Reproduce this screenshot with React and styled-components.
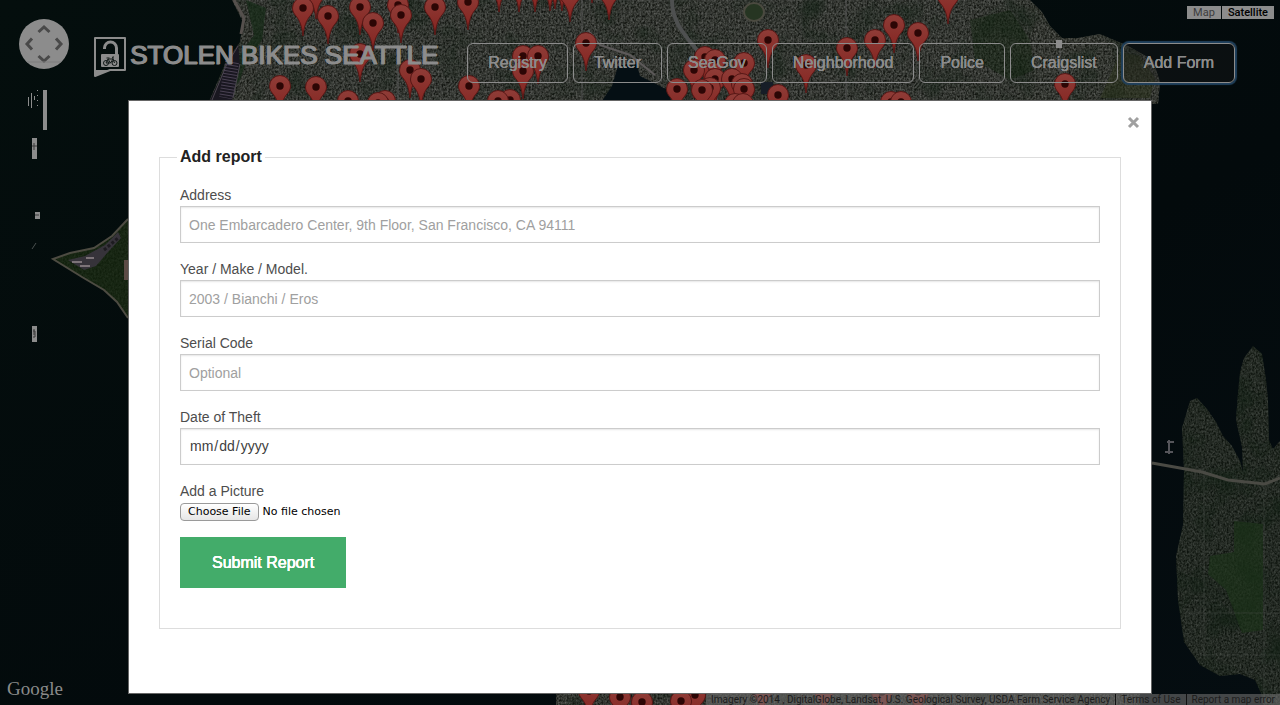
import React from "react";
import styled, { createGlobalStyle } from "styled-components";

const SANS = '"Liberation Sans", Arial, sans-serif';
const GREY = "#8c8c8c";

const GlobalStyle = createGlobalStyle`
  *, *::before, *::after { box-sizing: border-box; }
  body { margin: 0; background: #040b0c; font-family: ${SANS}; color: #222; }
`;

const Page = styled.div`
  position: relative;
  min-height: 100vh;
  overflow: hidden;
  display: flex;
  flex-direction: column;
`;

const MapLayer = styled.div`
  position: absolute;
  inset: 0;
  svg { display: block; width: 100%; height: 100%; }
`;

const Header = styled.header`
  position: relative;
  height: 100px;
  display: flex;
  align-items: flex-start;
  padding: 18px 45px 0 18px;
`;

const PanControl = styled.button`
  width: 52px;
  height: 52px;
  padding: 0;
  border: 0;
  background: none;
  flex: none;
  svg { display: block; }
`;

const Brand = styled.a`
  display: flex;
  align-items: flex-start;
  gap: 3px;
  margin: 18px auto 0 23px;
  color: ${GREY};
  text-decoration: none;
  white-space: nowrap;
  svg { display: block; flex: none; }
`;

const BrandName = styled.span`
  font-size: 26px;
  line-height: 38px;
  -webkit-text-stroke: 1px ${GREY};
  text-shadow: 1px 0 0 ${GREY};
`;

const Nav = styled.nav`
  display: flex;
  gap: 5px;
  margin-top: 25px;
`;

const NavButton = styled.button`
  height: 40px;
  padding: 0 20px;
  border: 1px solid ${GREY};
  border-radius: 6px;
  background: ${(p) => (p.$focused ? "rgba(30, 30, 30, 0.3)" : "transparent")};
  color: ${GREY};
  font: 16px/38px ${SANS};
  text-shadow: 0 0 0 ${GREY}, 0 0 0 ${GREY};
  box-shadow: ${(p) => (p.$focused ? "0 0 1px 2px #20405c" : "none")};
  white-space: nowrap;
`;

const MapType = styled.div`
  position: absolute;
  top: 6px;
  right: 6px;
  display: flex;
  gap: 1px;
`;

const MapTypeButton = styled.button`
  height: 13px;
  padding: 0 6px;
  border: 0;
  background: ${GREY};
  color: ${(p) => (p.$active ? "#000" : "#3c3c3c")};
  font: ${(p) => (p.$active ? 500 : 400)} 11px/13px Roboto, sans-serif;
`;

const Modal = styled.main`
  position: relative;
  width: 80%;
  margin: 0 auto 11px;
  padding: 48px 30px 64px;
  border: 1px solid #666;
  background: #fff;
`;

const Close = styled.button`
  position: absolute;
  top: 15px;
  right: 11px;
  width: 13px;
  height: 13px;
  padding: 0;
  border: 0;
  background: none;
  svg { display: block; }
`;

const Fieldset = styled.fieldset`
  margin: 0;
  padding: 20px 20px 40px;
  border: 1px solid #ddd;
`;

const Legend = styled.legend`
  margin-left: -3px;
  padding: 0 3px;
  font-size: 16px;
  line-height: 16px;
  font-weight: 700;
`;

const Field = styled.div`
  margin-bottom: 16px;
`;

const Label = styled.label`
  display: block;
  font-size: 14px;
  line-height: 21px;
  color: #4d4d4d;
`;

const TextInput = styled.input`
  display: block;
  width: 100%;
  height: 37px;
  padding: 8px;
  border: 1px solid #ccc;
  border-radius: 0;
  background: #fff;
  box-shadow: inset 0 1px 2px rgba(0, 0, 0, 0.1);
  color: #404040;
  font: 14px/19px ${SANS};
  &::placeholder { color: #a0a0a0; opacity: 1; }
  &::-webkit-calendar-picker-indicator { display: none; }
`;

const FileInput = styled.input`
  display: block;
  height: 19px;
  width: 100%;
  padding-top: 1px;
  color: #000;
  font: 11px/18px "DejaVu Sans", sans-serif;
  &::file-selector-button {
    height: 18px;
    margin: 0 4px 0 0;
    padding: 0 7px;
    border: 1px solid #9a9a9a;
    border-radius: 4px;
    background: linear-gradient(#fff, #f2f2f2 50%, #e6e6e6);
    color: #000;
    font: 11px/16px "DejaVu Sans", sans-serif;
  }
`;

const Submit = styled.button`
  display: block;
  height: 51px;
  padding: 0 32px;
  border: 0;
  background: #43ac6a;
  color: #fff;
  font: 16px/51px ${SANS};
  text-shadow: 0 0 0 #fff, 0 0 0 #fff, 0 0 0 #fff;
`;

const Google = styled.a`
  position: absolute;
  left: 7px;
  bottom: 4px;
  color: #8a8a8a;
  font: 19px/24px "Liberation Serif", serif;
  text-decoration: none;
`;

const Credits = styled.footer`
  position: absolute;
  right: 0;
  bottom: 0;
  display: flex;
  background: rgba(110, 110, 110, 0.6);
  color: #1c1c1c;
  font: 10px/11px Roboto, sans-serif;
  white-space: nowrap;
`;

const Credit = styled.span`
  padding: 0 5px;
  border-left: ${(p) => (p.$divided ? "1px solid #111" : "0")};
  a { color: inherit; text-decoration: none; }
`;

const PINS = [
  [499, -16], [519, -16], [535, -16], [550, -17], [555, -19], [562, -17], [570, -6], [592, -25], [609, -8],
  [316, -9], [398, 5], [303, 8], [360, 7], [435, 7], [468, 2], [328, 16], [401, 15], [373, 23],
  [948, -4], [894, 25], [918, 33], [875, 40], [768, 40], [586, 43], [847, 48], [360, 54],
  [523, 56], [538, 56], [705, 57], [715, 60], [744, 63], [806, 65], [410, 70], [694, 70], [523, 71],
  [421, 79], [715, 79], [732, 79], [742, 84], [1065, 84], [280, 86], [469, 86], [316, 87], [710, 88],
  [677, 89], [744, 89], [702, 90], [778, 95], [510, 100], [348, 101], [385, 101], [498, 101],
  [891, 102], [901, 102], [378, 103], [735, 104], [743, 104],
  [589, 691], [695, 695], [620, 697], [681, 701], [642, 702], [762, 689], [824, 689], [882, 692], [918, 692],
];

const CITY = "M232 0 L243 22 L240 42 L226 62 L208 104 L1158 104 L1160 82 L1153 60 L1128 46 L1100 34 L1078 38 L1062 38 L1050 26 L1042 12 L1030 0 Z";
const SOUTH = "M556 690 H1140 V705 H556 Z";
const POINT = "M53 259 L70 253 L94 248 L112 236 L128 219 L128 318 L117 302 L104 290 L82 277 Z";
const EAST =
  "M1190 401 L1197 398 L1207 409 L1216 422 L1223 436 L1232 446 L1240 461 L1243 472 L1242 447 L1236 420 L1238 393 L1240 372 L1244 358 L1253 346 L1262 354 L1266 380 L1268 400 L1269 440 L1273 449 L1280 441 V705 H1263 L1261 693 L1255 680 L1240 674 L1220 676 L1200 665 L1184 642 L1178 600 L1176 556 L1183 525 L1184 470 L1182 428 Z";

function Pin({ x, y }) {
  return (
    <g transform={`translate(${x} ${y})`}>
      <path
        d="M0 28 C-1.5 17 -3 13 -7 8 C-9.500 5 -10.500 3 -10.500 0 A10.500 10.500 0 0 1 10.500 0 C10.500 3 9.500 5 7 8 C3 13 1.500 17 0 28Z"
        fill="url(#pin)"
        stroke="#571715"
        strokeWidth="1"
      />
      <circle r="3.700" fill="#2c0605" />
    </g>
  );
}

function SatelliteMap() {
  return (
    <svg viewBox="0 0 1280 705" preserveAspectRatio="xMidYMin slice" aria-hidden="true">
      <defs>
        <linearGradient id="pin" x1="0" y1="0" x2="0" y2="1">
          <stop offset="0" stopColor="#8f3c37" />
          <stop offset="1" stopColor="#84231f" />
        </linearGradient>
        <linearGradient id="water" x1="0" y1="0" x2="1" y2="1">
          <stop offset="0" stopColor="#040e0d" />
          <stop offset="0.6" stopColor="#030a0c" />
          <stop offset="1" stopColor="#050d11" />
        </linearGradient>
        <filter id="grain" x="0" y="0" width="100%" height="100%" colorInterpolationFilters="sRGB">
          <feTurbulence type="fractalNoise" baseFrequency="0.550 0.450" numOctaves="2" seed="4" />
          <feColorMatrix values="0.700 0 0 0 -0.150  0.700 0 0 0 -0.140  0.700 0 0 0 -0.160  0 0 0 0 1" />
        </filter>
        <filter id="woods" x="0" y="0" width="100%" height="100%" colorInterpolationFilters="sRGB">
          <feTurbulence type="fractalNoise" baseFrequency="0.030" numOctaves="3" seed="9" />
          <feColorMatrix values="0 0 0 0 0.060  0 0 0 0 0.120  0 0 0 0 0.070  3 0 0 0 -1.450" />
        </filter>
        <pattern id="streets" width="9" height="13" patternUnits="userSpaceOnUse">
          <path d="M0 0H9M0 0V13" stroke="#666" strokeOpacity="0.220" />
        </pattern>
        <clipPath id="cityClip"><path d={CITY} /><path d={SOUTH} /></clipPath>
        <clipPath id="pointClip"><path d={POINT} /></clipPath>
        <clipPath id="eastClip"><path d={EAST} /></clipPath>
      </defs>

      <rect width="1280" height="705" fill="url(#water)" />

      <g clipPath="url(#cityClip)">
        <rect width="1280" height="705" fill="#343733" />
        <rect width="1280" height="705" filter="url(#grain)" opacity="0.650" />
        <rect width="1280" height="705" filter="url(#woods)" opacity="0.500" />
        <rect width="1280" height="705" fill="url(#streets)" />
        <path d="M246 0 L266 8 L262 40 L246 62 L240 80 L222 104 L216 98 L240 55 L254 35Z" fill="#142a15" opacity="0.700" />
        <path d="M970 20 L1010 10 L1030 40 L1034 70 L1010 80 L975 60Z" fill="#12240f" opacity="0.450" />
        <path d="M1120 52 L1140 56 L1155 78 L1150 98 L1100 98 L1110 76Z" fill="#2a311a" opacity="0.500" />
        <path d="M672 0 C672 22 684 34 697 50 S706 80 718 104" fill="none" stroke="#4e5050" strokeWidth="4" />
        <path d="M588 30 L600 45 L630 55 L655 75" fill="none" stroke="#5d5a5a" strokeWidth="2" />
        <path d="M618 66 L636 62 L640 76 L668 90 L672 104 L600 104 L612 86Z" fill="#050f14" />
        <rect x="761" y="82" width="12" height="12" fill="#161d27" />
        <ellipse cx="754" cy="12" rx="10" ry="9" fill="#263522" stroke="#4b4a40" strokeWidth="2" />
        <rect x="1056" y="40" width="6" height="8" fill="#8c8c8c" />
        <path d="M398 0V104M582 0V104M846 0V104M1060 48V104" stroke="#5c5c5c" strokeOpacity="0.400" strokeWidth="2" />
      </g>
      <path d="M234 0 L244 18 L241 34" fill="none" stroke="#55504d" strokeWidth="3" />
      <path d="M238 44 L240 64 L232 100 L210 100 L226 66Z" fill="#191720" />
      <path d="M238 46 L226 66 L212 100 M240 64 L233 98" fill="none" stroke="#4b464f" strokeWidth="1" />
      <path d="M232 62 L226 98" stroke="#4a4253" strokeWidth="14" strokeDasharray="1 2" />

      <g clipPath="url(#pointClip)">
        <rect x="50" y="200" width="80" height="130" fill="#13240f" />
        <rect x="50" y="200" width="80" height="130" filter="url(#grain)" opacity="0.150" />
        <path d="M68 260 L85 256 L105 245 L118 232 L121 238 L108 252 L96 266 L84 270Z" fill="#36333a" />
        <path d="M72 262H82M80 266H90M86 258H94" stroke="#7c7378" strokeWidth="2" />
        <path d="M104 250L118 238" stroke="#1d1b20" strokeWidth="3" strokeDasharray="3 2" />
        <path d="M126 260V280" stroke="#5c4b45" strokeWidth="4" />
      </g>
      <path d="M128 219 L112 236 L94 248 L70 253 L53 259 L82 277 L104 290 L117 302 L128 318" fill="none" stroke="#4d4b42" strokeWidth="2" />

      <g clipPath="url(#eastClip)">
        <rect x="1170" y="300" width="110" height="405" fill="#18211a" />
        <rect x="1170" y="300" width="110" height="405" filter="url(#grain)" opacity="0.450" />
        <rect x="1170" y="300" width="110" height="405" filter="url(#woods)" opacity="0.600" />
        <path d="M1234 521 L1263 524 V630 L1242 633 L1226 590 L1208 574 L1210 556 L1234 552Z" fill="#1b3319" opacity="0.650" />
        <path d="M1264 484V700M1204 470V656M1184 613H1280M1200 655H1280" stroke="#4c504c" strokeOpacity="0.400" />
      </g>
      <path d="M1152 463 L1180 468 L1202 472 L1228 480 L1265 484 L1280 478" fill="none" stroke="#4a4a44" strokeWidth="3" />
      <path d="M1167 442H1174M1165 452H1173M1169 440V454" stroke="#55555a" strokeWidth="2" />

      {PINS.map(([x, y], i) => (
        <Pin key={i} x={x} y={y} />
      ))}

      <g fill="#8c8c8c">
        <rect x="43" y="90" width="4" height="40" />
        <rect x="32" y="138" width="5" height="21" />
        <rect x="35" y="212" width="5" height="7" />
        <rect x="32" y="326" width="5" height="16" />
        <path d="M28 97h1v9h-1zM31 93h1v15h-1zM34 96h1v4h-1zM37 90h1v1h-1zM37 95h1v1h-1zM37 100h1v1h-1zM37 105h1v1h-1z" />
      </g>
      <path d="M32 146H37M34 143V150M35 215H39M33 331H35V337H33M34 329V335" fill="none" stroke="#3a3a3a" />
      <path d="M32 249L36 243" stroke="#4a504f" />
    </svg>
  );
}

const LINKS = ["Registry", "Twitter", "SeaGov", "Neighborhood", "Police", "Craigslist", "Add Form"];

export default function App() {
  return (
    <Page>
      <GlobalStyle />
      <MapLayer>
        <SatelliteMap />
      </MapLayer>

      <Header>
        <PanControl type="button" aria-label="Pan map">
          <svg width="52" height="52" viewBox="0 0 52 52">
            <circle cx="26" cy="26" r="25" fill="#8c8c8c" />
            <path d="M20.500 14L26 9L31.500 14M20.500 38L26 43L31.500 38M14 20.500L9 26L14 31.500M38 20.500L43 26L38 31.500" fill="none" stroke="#494949" strokeWidth="3" />
            <path d="M9 44H43" stroke="#7c7c7c" />
          </svg>
        </PanControl>
        <Brand href="#">
          <svg width="34" height="42" viewBox="0 0 34 42" aria-hidden="true">
            <path d="M2 2H32V34H17L2 40Z" fill="none" stroke="#8c8c8c" strokeWidth="2" strokeLinejoin="round" />
            <path d="M2 34H17L2 40Z" fill="#8c8c8c" />
            <path d="M11.500 13V12A6 6 0 0 1 23.500 12V20" fill="none" stroke="#8c8c8c" strokeWidth="3" />
            <rect x="8" y="18" width="18" height="13" rx="1" fill="#8c8c8c" />
            <g fill="none" stroke="#101817" strokeWidth="1">
              <circle cx="13" cy="27" r="2.500" />
              <circle cx="21.500" cy="27" r="2.500" />
              <path d="M13 27L15 23H20L17.500 27H13M15 23L17.500 27M21.500 27L19.500 21H21M13.500 22H16.500" />
            </g>
          </svg>
          <BrandName>STOLEN BIKES SEATTLE</BrandName>
        </Brand>
        <Nav>
          {LINKS.map((name) => (
            <NavButton key={name} type="button" $focused={name === "Add Form"}>
              {name}
            </NavButton>
          ))}
        </Nav>
        <MapType>
          <MapTypeButton type="button">Map</MapTypeButton>
          <MapTypeButton type="button" $active>Satellite</MapTypeButton>
        </MapType>
      </Header>

      <Modal>
        <Close type="button" aria-label="Close">
          <svg width="13" height="13" viewBox="0 0 13 13">
            <path d="M2 2L11 11M11 2L2 11" stroke="#a0a0a0" strokeWidth="3" />
          </svg>
        </Close>
        <form onSubmit={(e) => e.preventDefault()}>
          <Fieldset>
            <Legend>Add report</Legend>
            <Field>
              <Label htmlFor="address">Address</Label>
              <TextInput id="address" type="text" placeholder="One Embarcadero Center, 9th Floor, San Francisco, CA 94111" />
            </Field>
            <Field>
              <Label htmlFor="model">Year / Make / Model.</Label>
              <TextInput id="model" type="text" placeholder="2003 / Bianchi / Eros" />
            </Field>
            <Field>
              <Label htmlFor="serial">Serial Code</Label>
              <TextInput id="serial" type="text" placeholder="Optional" />
            </Field>
            <Field>
              <Label htmlFor="date">Date of Theft</Label>
              <TextInput id="date" type="date" />
            </Field>
            <Field>
              <Label htmlFor="picture">Add a Picture</Label>
              <FileInput id="picture" type="file" />
            </Field>
            <Submit type="submit">Submit Report</Submit>
          </Fieldset>
        </form>
      </Modal>

      <Google href="#">Google</Google>
      <Credits>
        <Credit>Imagery ©2014 , DigitalGlobe, Landsat, U.S. Geological Survey, USDA Farm Service Agency</Credit>
        <Credit $divided><a href="#">Terms of Use</a></Credit>
        <Credit $divided><a href="#">Report a map error</a></Credit>
      </Credits>
    </Page>
  );
}
